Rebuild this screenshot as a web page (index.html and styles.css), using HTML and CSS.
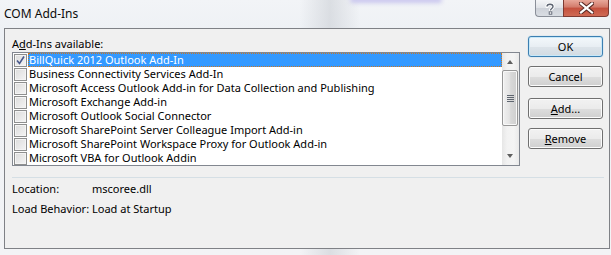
FILE: index.html
```html
<!DOCTYPE html>
<html>
<head>
<meta charset="utf-8">
<link rel="stylesheet" href="styles.css">
</head>
<body>
<div class="window">
  <div class="glass-blur"></div>
  <div class="titlebar">
    <div class="title">COM Add-Ins</div>
    <div class="caption-buttons">
      <div class="cap-btn help">
        <svg width="12" height="13" viewBox="0 0 12 13">
          <path d="M3 4.5 C3 1.5 9 1.5 9 4.5 C9 6.5 6.5 6.5 6.5 8.5" fill="none" stroke="#fff" stroke-width="3.2" stroke-linecap="round"/>
          <path d="M3 4.5 C3 1.5 9 1.5 9 4.5 C9 6.5 6.5 6.5 6.5 8.5" fill="none" stroke="#5b6270" stroke-width="1.4"/>
          <rect x="5.2" y="9.8" width="2.6" height="2.4" fill="#fff" stroke="#5b6270" stroke-width="0.9"/>
        </svg>
      </div>
      <div class="cap-btn close">
        <svg width="15" height="12" viewBox="0 0 15 12">
          <path d="M2 1.5 L13 10.5 M13 1.5 L2 10.5" stroke="#5a2a25" stroke-width="4.2" stroke-linecap="square"/>
          <path d="M2 1.5 L13 10.5 M13 1.5 L2 10.5" stroke="#fff" stroke-width="2.2" stroke-linecap="square"/>
        </svg>
      </div>
    </div>
  </div>
  <div class="client">
    <div class="main">
      <div class="list-area">
        <div class="label"><span>A<u>d</u>d-Ins available:</span></div>
        <div class="listbox">
          <div class="rows">
            <div class="row selected"><span class="cb checked"><svg width="11" height="11" viewBox="0 0 11 11"><path d="M2 5.5 L4.5 8.5 L9 1.5" fill="none" stroke="#4a5a8c" stroke-width="1.6"/></svg></span><span class="text">BillQuick 2012 Outlook Add-In</span></div>
            <div class="row"><span class="cb"></span><span class="text">Business Connectivity Services Add-In</span></div>
            <div class="row"><span class="cb"></span><span class="text">Microsoft Access Outlook Add-in for Data Collection and Publishing</span></div>
            <div class="row"><span class="cb"></span><span class="text">Microsoft Exchange Add-in</span></div>
            <div class="row"><span class="cb"></span><span class="text">Microsoft Outlook Social Connector</span></div>
            <div class="row"><span class="cb"></span><span class="text">Microsoft SharePoint Server Colleague Import Add-in</span></div>
            <div class="row"><span class="cb"></span><span class="text">Microsoft SharePoint Workspace Proxy for Outlook Add-in</span></div>
            <div class="row"><span class="cb"></span><span class="text">Microsoft VBA for Outlook Addin</span></div>
          </div>
          <div class="scrollbar">
            <div class="arrow up"></div>
            <div class="track">
              <div class="thumb"><span class="grip"></span></div>
            </div>
            <div class="arrow down"></div>
          </div>
        </div>
      </div>
      <div class="buttons">
        <div class="btn default">OK</div>
        <div class="btn">Cancel</div>
        <div class="btn"><span><u>A</u>dd...</span></div>
        <div class="btn"><span><u>R</u>emove</span></div>
      </div>
    </div>
    <div class="separator"></div>
    <div class="info">
      <div class="info-row"><span class="info-key">Location:</span><span>mscoree.dll</span></div>
      <div class="info-row"><span class="info-key">Load Behavior:</span><span>Load at Startup</span></div>
    </div>
  </div>
</div>
</body>
</html>
```

FILE: styles.css
```css
html, body {
  margin: 0;
  padding: 0;
}
body {
  width: 611px;
  height: 255px;
  overflow: hidden;
  font-family: "Noto Sans", "Liberation Sans", sans-serif;
  font-size: 11px;
  color: #000;
}
.window {
  position: relative;
  width: 611px;
  height: 255px;
  background:
    linear-gradient(90deg, rgba(255,255,255,0) 0, rgba(255,255,255,0) 300px, rgba(200,204,210,0.55) 330px, rgba(255,255,255,0) 360px),
    linear-gradient(180deg, #f2f4f7 0, #eef1f5 30px, #f3f4f6 100%);
  display: flex;
  flex-direction: column;
}
.glass-blur {
  position: absolute;
  left: 350px;
  top: -3px;
  width: 92px;
  height: 6px;
  background: #c9c6ee;
  filter: blur(2px);
  border-radius: 3px;
}
.titlebar {
  height: 28px;
  display: flex;
  justify-content: space-between;
  align-items: flex-start;
  position: relative;
}
.title {
  font-size: 12px;
  padding: 6px 0 0 4px;
  color: #0b0b0b;
  line-height: 16px;
}
.caption-buttons {
  display: flex;
  margin-right: 2px;
}
.cap-btn {
  height: 17px;
  display: flex;
  align-items: center;
  justify-content: center;
  box-sizing: border-box;
}
.help {
  width: 28px;
  border: 1px solid #8a8f99;
  border-top: none;
  border-right: none;
  border-bottom-left-radius: 4px;
  background: linear-gradient(180deg, #f4f5f7 0, #dfe2e7 50%, #cdd1d8 51%, #d9dde3 100%);
}
.close {
  width: 46px;
  border: 1px solid #7e3a32;
  border-top: none;
  border-bottom-right-radius: 4px;
  background: linear-gradient(180deg, #e8a89a 0, #d27a6a 45%, #c4503d 50%, #cf6a55 100%);
}
.client {
  margin: 0 1px 0 4px;
  height: 221px;
  box-sizing: border-box;
  border: 1px solid #7f8186;
  background: #f0f0f0;
  padding: 7px 5px 0 7px;
  display: flex;
  flex-direction: column;
}
.main {
  display: flex;
  gap: 8px;
}
.list-area {
  width: 508px;
  display: flex;
  flex-direction: column;
}
.label {
  margin-top: 1px;
  height: 15px;
  line-height: 14px;
}
u {
  text-decoration: underline;
  text-underline-offset: 1px;
}
.listbox {
  height: 114px;
  box-sizing: border-box;
  border: 1px solid #828790;
  background: #fff;
  display: flex;
}
.rows {
  flex: 1;
  display: flex;
  flex-direction: column;
}
.row {
  height: 14px;
  display: flex;
  align-items: center;
  white-space: nowrap;
}
.cb {
  width: 13px;
  height: 13px;
  box-sizing: border-box;
  margin-left: 1px;
  margin-right: 1px;
  border: 1px solid #8e8f8f;
  background: linear-gradient(135deg, #dcdcdc 0, #f4f4f4 100%);
  box-shadow: inset 0 0 0 1px #f4f4f4;
  display: flex;
  align-items: center;
  justify-content: center;
}
.text {
  flex: 1;
  height: 14px;
  line-height: 14px;
  padding-left: 1px;
  box-sizing: border-box;
}
.selected .text {
  background: #3399ff;
  color: #fff;
  outline: 1px dotted #cc7722;
  outline-offset: -1px;
}
.scrollbar {
  width: 17px;
  display: flex;
  flex-direction: column;
  background: linear-gradient(90deg, #e6e6e6 0, #f2f2f2 30%, #f4f4f4 70%, #e9e9e9 100%);
}
.arrow {
  height: 17px;
  position: relative;
}
.arrow::after {
  content: "";
  position: absolute;
  left: 5px;
  width: 0;
  height: 0;
  border-left: 3.5px solid transparent;
  border-right: 3.5px solid transparent;
}
.arrow.up::after {
  top: 7px;
  border-bottom: 4px solid #5f5f5f;
}
.arrow.down::after {
  top: 6px;
  border-top: 4px solid #5f5f5f;
}
.track {
  flex: 1;
  position: relative;
}
.thumb {
  margin: 0 1px 0 0;
  height: 56px;
  box-sizing: border-box;
  border: 1px solid #979797;
  border-radius: 2px;
  background: linear-gradient(90deg, #f1f1f1 0, #e4e4e4 45%, #d8d8d8 55%, #cfcfcf 100%);
  box-shadow: inset 0 0 0 1px #f8f8f8;
  display: flex;
  align-items: center;
  justify-content: center;
}
.grip {
  width: 7px;
  height: 7px;
  background: repeating-linear-gradient(180deg, #5f6670 0, #5f6670 1px, transparent 1px, transparent 2px);
}
.buttons {
  width: 75px;
  display: flex;
  flex-direction: column;
}
.btn {
  height: 21px;
  box-sizing: border-box;
  border: 1px solid #707070;
  border-radius: 3px;
  background: linear-gradient(180deg, #f2f2f2 0, #ebebeb 50%, #dddddd 51%, #cfcfcf 100%);
  box-shadow: inset 0 0 0 1px #fbfbfb;
  display: flex;
  align-items: center;
  justify-content: center;
  line-height: 14px;
  margin-bottom: 9px;
}
.btn:nth-child(2) { margin-bottom: 11px; }
.btn.default {
  border-color: #3c7fb1;
  box-shadow: inset 0 0 0 1px #c8e8f8, 0 0 1px #5ab0e0;
  background: linear-gradient(180deg, #f3f8fb 0, #e8eef3 50%, #dde4ea 51%, #d2dbe2 100%);
}
.separator {
  margin-top: 11px;
  height: 1px;
  background: #d5dfe5;
}
.info {
  padding-top: 1px;
  display: flex;
  flex-direction: column;
}
.info-row {
  height: 20px;
  line-height: 20px;
  display: flex;
}
.info-key {
  width: 80px;
}
```
